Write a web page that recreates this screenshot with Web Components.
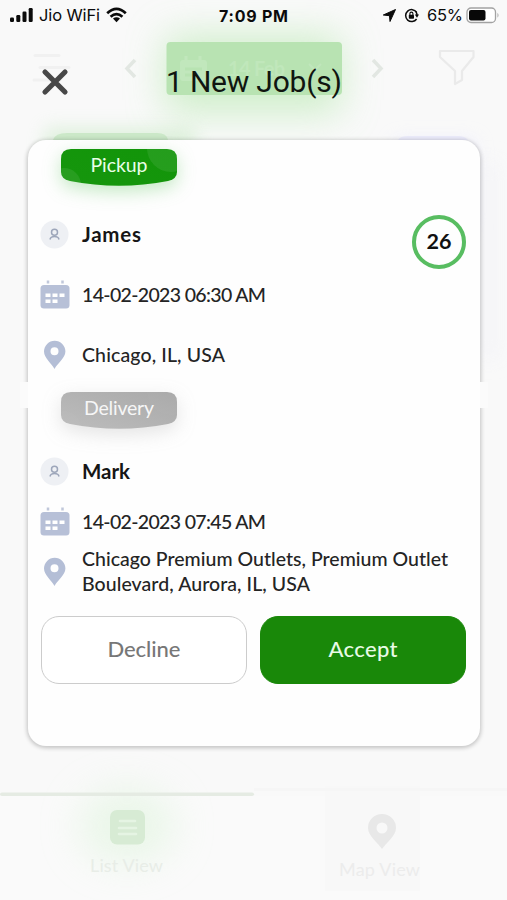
<!DOCTYPE html>
<html lang="en">
<head>
<meta charset="utf-8">
<title>New jobs</title>
<style>
html,body{margin:0;height:100%;overflow:hidden}
body{background:#f9f9f9;font-family:"Lato","Liberation Sans",sans-serif;color:#1c1c1c}
</style>
</head>
<body>
<job-screen></job-screen>
<script>
const define = (name, html, after) => customElements.define(name, class extends HTMLElement {
  connectedCallback() {
    if (this.shadowRoot) return;
    const t = document.createElement('template');
    t.innerHTML = html;
    this.attachShadow({mode: 'open'}).append(t.content.cloneNode(true));
    if (after) after.call(this, this.shadowRoot);
  }
});

/* Single line of text tracked out to the width given in "w". */
define('fit-text', `<style>:host{display:block;white-space:nowrap;line-height:1}span{display:inline-block}</style><span><slot></slot></span>`, function (root) {
  const w = +this.getAttribute('w'), s = root.querySelector('span');
  this.style.width = w + 'px';
  const n = this.textContent.length;
  s.style.letterSpacing = ((w - s.getBoundingClientRect().width) / (n - 1)).toFixed(3) + 'px';
});

define('status-bar', `<style>
:host{display:flex;height:30px;box-sizing:border-box;padding:0 7px 0 9px;align-items:center;color:#0b0b0b;font:500 16px Inter,sans-serif}
svg{display:block;flex:none}.l{display:flex;align-items:center;gap:6px;width:210px}.r{display:flex;align-items:center;margin-left:auto}
</style>
<div class="l"><svg width="24" height="16" viewBox="0 0 24 16" fill="#0b0b0b"><rect x="1" y="10.5" width="4" height="4.5" rx="1.2"/><rect x="7.3" y="8" width="4" height="7" rx="1.2"/><rect x="13.5" y="4.5" width="4" height="10.5" rx="1.2"/><rect x="19.7" y="1" width="4" height="14" rx="1.2"/></svg>
<fit-text w="61" style="font-size:16.5px;font-weight:400">Jio WiFi</fit-text>
<svg width="21" height="16" viewBox="0 0 21 16" fill="none" stroke="#0b0b0b" stroke-width="2.7"><path d="M1.200 6.200Q10.500-2.600 19.800 6.200M4.600 9.800Q10.500 4.300 16.400 9.800"/><path d="M7 11.600Q10.500 8.800 14 11.600L10.500 15.200Z" fill="#0b0b0b" stroke="none"/></svg></div>
<fit-text w="69" style="font-size:16px;font-weight:650;padding-top:1px">7:09 PM</fit-text>
<div class="r"><svg width="13" height="13" viewBox="0 0 13 13"><path d="M12.500.5 7 12.500 6.500 6.700.3 6Z" fill="#0b0b0b" stroke="#0b0b0b" stroke-linejoin="round"/></svg>
<svg style="margin:0 8px 0 8px" width="15" height="15" viewBox="0 0 15 15"><path d="M12.600 4.200A6 6 0 1 0 12.600 11" fill="none" stroke="#0b0b0b" stroke-width="1.500"/><path d="M10.800 6.500h4.200l-2 3.200Z" fill="#0b0b0b"/><path d="M12 4q1 1.500 1 3" stroke="#0b0b0b" stroke-width="1.500" fill="none"/><rect x="4.800" y="6.700" width="5.200" height="4" rx=".7" fill="#0b0b0b"/><path d="M5.900 7V5.600a1.500 1.500 0 0 1 3 0V7" fill="none" stroke="#0b0b0b" stroke-width="1.100"/></svg>
<fit-text w="36" style="font-size:16.500px;font-weight:400">65%</fit-text>
<svg style="margin-left:3px" width="34" height="17" viewBox="0 0 34 17"><rect x="1" y="1" width="28.500" height="14.500" rx="4" fill="#fff" stroke="#a2a2a2" stroke-width="1.300"/><rect x="3" y="3" width="16.500" height="10.500" rx="2" fill="#080808"/><path d="M31.500 5.700q2 2.500 0 5Z" fill="#a2a2a2"/></svg></div>`);

/* The dimmed list page that lies under the dialog. */
define('dimmed-page', `<style>
:host{position:absolute;inset:0;z-index:-1;overflow:hidden;background:#f9f9f9}
svg{display:block}
</style>
<svg width="507" height="900" viewBox="0 0 507 900">
<defs><filter id="b" x="-50%" y="-100%" width="200%" height="300%"><feGaussianBlur stdDeviation="19"/></filter><filter id="c" x="-50%" y="-50%" width="200%" height="200%"><feGaussianBlur stdDeviation="9"/></filter></defs>
<rect x="165" y="35" width="176" height="78" fill="#b5e8ad" opacity=".62" filter="url(#b)"/>
<rect x="45" y="128" width="150" height="55" fill="#b5e3b0" opacity=".4" filter="url(#c)"/>
<rect x="395" y="140" width="80" height="90" fill="#e2e2ff" opacity=".5" filter="url(#c)"/>
<rect x="476" y="160" width="25" height="200" fill="#f2f2f7" opacity=".5" filter="url(#c)"/>
<path d="M35 55.500h24M40 67.500h29M34 80h26" stroke="#f1f1f1" stroke-width="3" stroke-linecap="round"/>
<path d="m135 60-8 8.500 8 8.500M373 60l8 8.500-8 8.500" fill="none" stroke="#e2e7e2" stroke-width="3.500"/>
<rect x="166.500" y="42" width="175.500" height="53" rx="4" fill="#b8e3b2"/>
<rect x="180" y="60" width="27" height="21" rx="3" fill="#c1e7bc"/><path d="M186 56v6M200 56v6" stroke="#c1e7bc" stroke-width="3"/><path d="M185 69h17M185 75h11" stroke="#b8e3b2" stroke-width="3"/>
<text x="228" y="76" font-family="Lato" font-size="20" font-weight="700" textLength="57" fill="#c0e7bb">14 Feb</text>
<path d="m309 64 6 6 6-6" fill="none" stroke="#c0e6bc" stroke-width="2"/>
<path d="M440 51h33.500v6l-11.500 14v9l-7 4V71L440 57Z" fill="none" stroke="#eaeaea" stroke-width="2.200" stroke-linejoin="round"/>
<path d="M53 140q2-7 14-7h90q10 0 11 7Z" fill="#cbe8c8"/><path d="M398 140q2-4 10-4h50q7 0 10 4Z" fill="#ebebfb"/>
<rect y="796" width="507" height="104" fill="#fafafa"/>
<rect x="325" y="786" width="95" height="105" fill="#f8f8f8"/>
<ellipse cx="127" cy="826" rx="48" ry="38" fill="#dff4dd" opacity=".6" filter="url(#b)"/>
<rect x="0" y="792.500" width="254" height="3.500" rx="2" fill="#e5ebe3"/>
<rect x="254" y="788" width="253" height="3" fill="#f6f6f6"/>
<rect x="110" y="810" width="35" height="34.500" rx="7" fill="#d7ebd4"/><path d="M120 821h15M119 828h17M119 834h17" stroke="#e5f4e3" stroke-width="2.500" stroke-linecap="round"/>
<text x="90" y="872" font-family="Lato" font-size="18" textLength="73" fill="#e8ede7">List View</text>
<path fill-rule="evenodd" d="M382 849c-4-6-14-13-14-21a14 14 0 0 1 28 0c0 8-10 15-14 21Zm0-15.500a5.500 5.500 0 1 0 0-11 5.500 5.500 0 0 0 0 11Z" fill="#e8e8e8"/>
<text x="339" y="876" font-family="Lato" font-size="18" textLength="81" fill="#ececec">Map View</text>
</svg>`);

define('dialog-header', `<style>
:host{display:flex;height:110px;box-sizing:border-box;padding:36px 0 0 41px;align-items:flex-start}
svg{flex:none;margin-top:2px}fit-text{margin:1px 0 0 97px;font:400 30px/1 Roboto,sans-serif;color:#101510}
</style>
<svg width="28" height="28" viewBox="0 0 28 28"><path d="m4 4 20 20M24 4 4 24" stroke="#484848" stroke-width="5.200" stroke-linecap="round"/></svg>
<fit-text w="175"><slot></slot></fit-text>`, function (root) {
  /* the slotted title is tracked from its own text */
  const s = root.querySelector('fit-text').shadowRoot.querySelector('span');
  s.style.letterSpacing = '0';
  s.style.letterSpacing = ((176 - s.getBoundingClientRect().width) / (this.textContent.length - 1)).toFixed(3) + 'px';
});

define('stage-tag', `<style>
:host{display:grid;width:116px;height:37px;margin-left:33px;color:#e9ffe8}
svg,div{grid-area:1/1}svg{overflow:visible;filter:drop-shadow(0 6px 9px var(--glow))}
div{position:relative;display:flex;justify-content:center;padding-top:6px}
</style>
<svg width="116" height="37" viewBox="0 0 116 37"><defs><linearGradient id="g" x1="0" y1="1" x2="1" y2="0"><stop offset="0" style="stop-color:var(--a)"/><stop offset="1" style="stop-color:var(--b)"/></linearGradient><clipPath id="k"><path d="M10 0H106Q116 0 116 10V23Q116 30 107 32Q58 41.500 9 32Q0 30 0 23V10Q0 0 10 0Z"/></clipPath></defs>
<g clip-path="url(#k)"><rect width="116" height="38" fill="url(#g)"/><circle cx="110" cy="-1" r="24" fill="#fff" opacity="var(--o)" style="opacity:var(--o)"/><circle cx="3" cy="36" r="17" fill="#fff" style="opacity:var(--o)"/></g></svg>
<div><slot></slot></div>`);

const icons = {
  person: '<circle cx="14.500" cy="14.500" r="14" fill="#eef0f4"/><circle cx="14.500" cy="12.200" r="3" fill="none" stroke="#9da6ba" stroke-width="1.500"/><path d="M10 19.500q.6-3 4.500-3t4.500 3" fill="none" stroke="#9da6ba" stroke-width="1.500"/>',
  calendar: '<path d="M8 .5v3M22.500 .5v3" stroke="#c0c7da" stroke-width="2.500"/><rect x=".5" y="5" width="29" height="23.500" rx="3.500" fill="#b7c0d7"/><path d="M5.500 13.500h5v3.500h-5ZM12.500 13.500h5v3.500h-5ZM19.500 13.500h5v3.500h-5ZM5.500 19.500h5v3.500h-5ZM12.500 19.500h5v3.500h-5Z" fill="#fff"/>',
  pin: '<path fill-rule="evenodd" d="M14.500 29C12 24 4 18 4 11.500a10.700 10.700 0 0 1 21.400 0C25.400 18 17 24 14.500 29Zm0-13.700a4 4 0 1 0 0-8 4 4 0 0 0 0 8Z" fill="#b4bed6"/>'
};
define('info-row', `<style>
:host{display:flex;align-items:center;padding-left:12px;font-size:19.500px;font-weight:500;color:#242424;height:60px}
svg{flex:none;margin-right:12px}
.t{display:flex;flex-direction:column;gap:6px;padding-bottom:1.500px}
:host([icon=person]){font-weight:700;font-size:20.500px;color:#161616}
</style><svg width="30" height="30" viewBox="0 0 30 30"></svg><div class="t"><slot></slot></div>`, function (root) {
  root.querySelector('svg').innerHTML = icons[this.getAttribute('icon')];
});

define('count-badge', `<style>:host{position:absolute;right:14px;top:75px;width:54px;height:54px;box-sizing:border-box;border:4px solid #58bd61;border-radius:50%;display:grid;place-items:center;font-size:21.500px;font-weight:700;color:#111;padding-bottom:1px}</style><slot></slot>`);

define('action-button', `<style>
:host{flex:1;height:68px;box-sizing:border-box;border-radius:18px;border:1.500px solid #ccc;background:#fff;color:#777;display:grid;place-items:center;font-size:22px;font-weight:500;padding-bottom:2px}
:host([primary]){background:#198809;border-color:#198809;color:#e8fbe6}
</style><slot></slot>`);

define('job-card', `<style>
:host{position:relative;display:block;width:452px;height:606px;box-sizing:border-box;margin-left:28px;padding-top:9px;background:#fefefe;border-radius:18px;box-shadow:0 1px 4px 1px #00000038}
.notch{position:absolute;top:242px;width:8px;height:26px;background:#fbfbfb}.a{left:-8px}.z{right:-8px}
.buttons{display:flex;gap:13px;padding:0 14px 0 13px}
</style><i class="notch a"></i><i class="notch z"></i><slot></slot><div class="buttons"><slot name="action"></slot></div>`);

define('job-screen', `<style>:host{position:relative;z-index:0;display:block;width:507px;height:900px;overflow:hidden}</style>
<dimmed-page></dimmed-page>
<status-bar></status-bar>
<dialog-header>1 New Job(s)</dialog-header>
<job-card>
 <stage-tag style="--a:#16960d;--b:#129509;--o:.08;--glow:#45bd4550"><fit-text w="57" style="font-size:19.500px">Pickup</fit-text></stage-tag>
 <info-row icon="person" style="margin-top:19px"><fit-text w="59">James</fit-text></info-row>
 <info-row icon="calendar"><fit-text w="184">14-02-2023 06:30 AM</fit-text></info-row>
 <info-row icon="pin"><fit-text w="143">Chicago, IL, USA</fit-text></info-row>
 <count-badge><fit-text w="25">26</fit-text></count-badge>
 <stage-tag style="--a:#bdbdbd;--b:#a9a9a9;--o:.02;--glow:#99999940;color:#f6f6f6;margin-top:7px"><fit-text w="70" style="font-size:19.500px">Delivery</fit-text></stage-tag>
 <info-row icon="person" style="margin-top:18px;height:50px"><fit-text w="48">Mark</fit-text></info-row>
 <info-row icon="calendar" style="height:50px"><fit-text w="184">14-02-2023 07:45 AM</fit-text></info-row>
 <info-row icon="pin" style="height:50px;margin-bottom:19px"><fit-text w="366">Chicago Premium Outlets, Premium Outlet</fit-text><fit-text w="228">Boulevard, Aurora, IL, USA</fit-text></info-row>
 <action-button slot="action"><fit-text w="73">Decline</fit-text></action-button>
 <action-button slot="action" primary><fit-text w="69">Accept</fit-text></action-button>
</job-card>`);
</script>
</body>
</html>
